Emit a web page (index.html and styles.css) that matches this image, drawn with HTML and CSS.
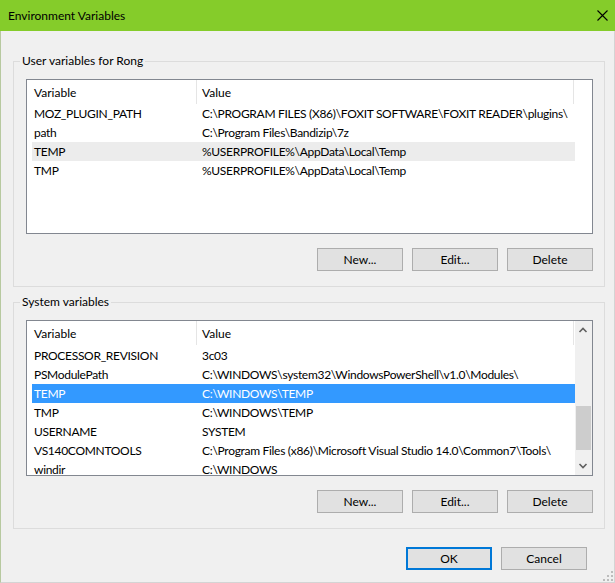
FILE: index.html
```html
<!DOCTYPE html>
<html>
<head>
<meta charset="utf-8">
<title>Environment Variables</title>
<link rel="stylesheet" href="styles.css">
</head>
<body>
<div class="window">
  <div class="titlebar">
    <span class="title">Environment Variables</span>
    <svg class="close" viewBox="0 0 11 11" width="11" height="11"><path d="M0.5 0.5 L10.5 10.5 M10.5 0.5 L0.5 10.5" stroke="#000" stroke-width="1.1" fill="none"/></svg>
  </div>
  <div class="content">
    <fieldset class="group">
      <legend>User variables for Rong</legend>
      <div class="list user-list">
        <div class="list-main">
          <div class="header"><div class="hcell">Variable</div><div class="hcell">Value</div></div>
          <div class="rows">
            <div class="row"><span>MOZ_PLUGIN_PATH</span><span>C:\PROGRAM FILES (X86)\FOXIT SOFTWARE\FOXIT READER\plugins\</span></div>
            <div class="row"><span>path</span><span>C:\Program Files\Bandizip\7z</span></div>
            <div class="row inactive"><span>TEMP</span><span>%USERPROFILE%\AppData\Local\Temp</span></div>
            <div class="row"><span>TMP</span><span>%USERPROFILE%\AppData\Local\Temp</span></div>
          </div>
        </div>
        <div class="scroll-space"></div>
      </div>
      <div class="buttons">
        <button class="btn">New...</button>
        <button class="btn">Edit...</button>
        <button class="btn">Delete</button>
      </div>
    </fieldset>

    <fieldset class="group system">
      <legend>System variables</legend>
      <div class="list sys-list">
        <div class="list-main">
          <div class="header"><div class="hcell">Variable</div><div class="hcell">Value</div></div>
          <div class="rows scrolled">
            <div class="row"><span>PROCESSOR_REVISION</span><span>3c03</span></div>
            <div class="row"><span>PSModulePath</span><span>C:\WINDOWS\system32\WindowsPowerShell\v1.0\Modules\</span></div>
            <div class="row selected"><span>TEMP</span><span>C:\WINDOWS\TEMP</span></div>
            <div class="row"><span>TMP</span><span>C:\WINDOWS\TEMP</span></div>
            <div class="row"><span>USERNAME</span><span>SYSTEM</span></div>
            <div class="row"><span>VS140COMNTOOLS</span><span>C:\Program Files (x86)\Microsoft Visual Studio 14.0\Common7\Tools\</span></div>
            <div class="row"><span>windir</span><span>C:\WINDOWS</span></div>
          </div>
        </div>
        <div class="scrollbar">
          <div class="sb-btn"><svg viewBox="0 0 17 17" width="17" height="17"><path d="M4.5 11 L8 7.5 L11.5 11" stroke="#606060" stroke-width="1.6" fill="none"/></svg></div>
          <div class="sb-track"><div class="sb-thumb"></div></div>
          <div class="sb-btn"><svg viewBox="0 0 17 17" width="17" height="17"><path d="M4.5 6 L8 9.5 L11.5 6" stroke="#606060" stroke-width="1.6" fill="none"/></svg></div>
        </div>
      </div>
      <div class="buttons">
        <button class="btn">New...</button>
        <button class="btn">Edit...</button>
        <button class="btn">Delete</button>
      </div>
    </fieldset>

    <div class="dialog-buttons">
      <button class="btn primary">OK</button>
      <button class="btn">Cancel</button>
    </div>
  </div>
  <svg class="grip" viewBox="0 0 10 10" width="10" height="10">
    <rect x="8" y="0" width="2" height="2" fill="#bcbcbc"/>
    <rect x="4" y="4" width="2" height="2" fill="#bcbcbc"/>
    <rect x="8" y="4" width="2" height="2" fill="#bcbcbc"/>
    <rect x="0" y="8" width="2" height="2" fill="#bcbcbc"/>
    <rect x="4" y="8" width="2" height="2" fill="#bcbcbc"/>
    <rect x="8" y="8" width="2" height="2" fill="#bcbcbc"/>
  </svg>
</div>
</body>
</html>
```
FILE: styles.css
```css
* { box-sizing: border-box; }
html, body { margin: 0; padding: 0; }
body {
  width: 615px;
  height: 583px;
  overflow: hidden;
  font-family: Lato, "Liberation Sans", sans-serif;
  font-size: 12px;
  color: #000;
  background: #f0f0f0;
}
.window {
  width: 615px;
  height: 583px;
  display: flex;
  flex-direction: column;
  position: relative;
}
.titlebar {
  flex: none;
  height: 31px;
  background: #85cc2a;
  display: flex;
  align-items: center;
  justify-content: space-between;
  padding: 0 7px 0 8px;
}
.title { font-size: 12px; line-height: 16px; }
.close { display: block; }
.content {
  flex: 1;
  border-left: 1px solid #b7c9a0;
  border-right: 1px solid #d4d4d4;
  border-bottom: 1px solid #d4d4d4;
  padding: 22px 9px 0 12px;
}
.group {
  margin: 0;
  min-width: 0;
  border: 1px solid #dcdcdc;
  padding: 10px 11px 15px 12px;
}
.group.system { margin-top: 7px; }
.group legend {
  padding: 0 2px;
  margin-left: -6px;
  line-height: 16px;
  font-size: 12px;
}
.list {
  height: 155px;
  border: 1px solid #828790;
  background: #fff;
  display: flex;
}
.sys-list { height: 156px; }
.list-main {
  flex: 1;
  min-width: 0;
  overflow: hidden;
}
.scroll-space { width: 17px; flex: none; }
.header {
  display: grid;
  grid-template-columns: 170px 377px;
  height: 24px;
}
.hcell {
  display: flex;
  align-items: center;
  border-right: 1px solid #e5e5e5;
  padding-left: 7px;
}
.hcell + .hcell { padding-left: 5px; }
.rows { padding-left: 5px; }
.rows.scrolled { margin-top: 1px; }
.row {
  display: grid;
  grid-template-columns: 168px 374px;
  height: 19px;
  align-items: center;
}
.row span {
  padding: 0 0 0 2px;
  letter-spacing: -0.3px;
  white-space: nowrap;
  overflow: hidden;
  text-overflow: ellipsis;
}
.row.inactive { background: #ececec; }
.row.selected { background: #3399ff; color: #fff; }
.scrollbar {
  width: 17px;
  flex: none;
  display: flex;
  flex-direction: column;
  background: #f0f0f0;
}
.sb-btn { height: 17px; flex: none; }
.sb-btn svg { display: block; }
.sb-track { flex: 1; }
.sb-thumb {
  margin: 68px 1px 0 1px;
  height: 44px;
  background: #cdcdcd;
}
.buttons {
  display: flex;
  justify-content: flex-end;
  gap: 9px;
  margin-top: 14px;
}
.btn {
  width: 86px;
  height: 23px;
  padding: 0;
  margin: 0;
  font: inherit;
  color: #000;
  background: #e1e1e1;
  border: 1px solid #adadad;
  border-radius: 0;
}
.btn.primary { border: 2px solid #0078d7; }
.dialog-buttons {
  display: flex;
  justify-content: flex-end;
  gap: 9px;
  margin-top: 18px;
  padding-right: 18px;
}
.grip {
  position: absolute;
  right: 2px;
  bottom: 2px;
}
```
